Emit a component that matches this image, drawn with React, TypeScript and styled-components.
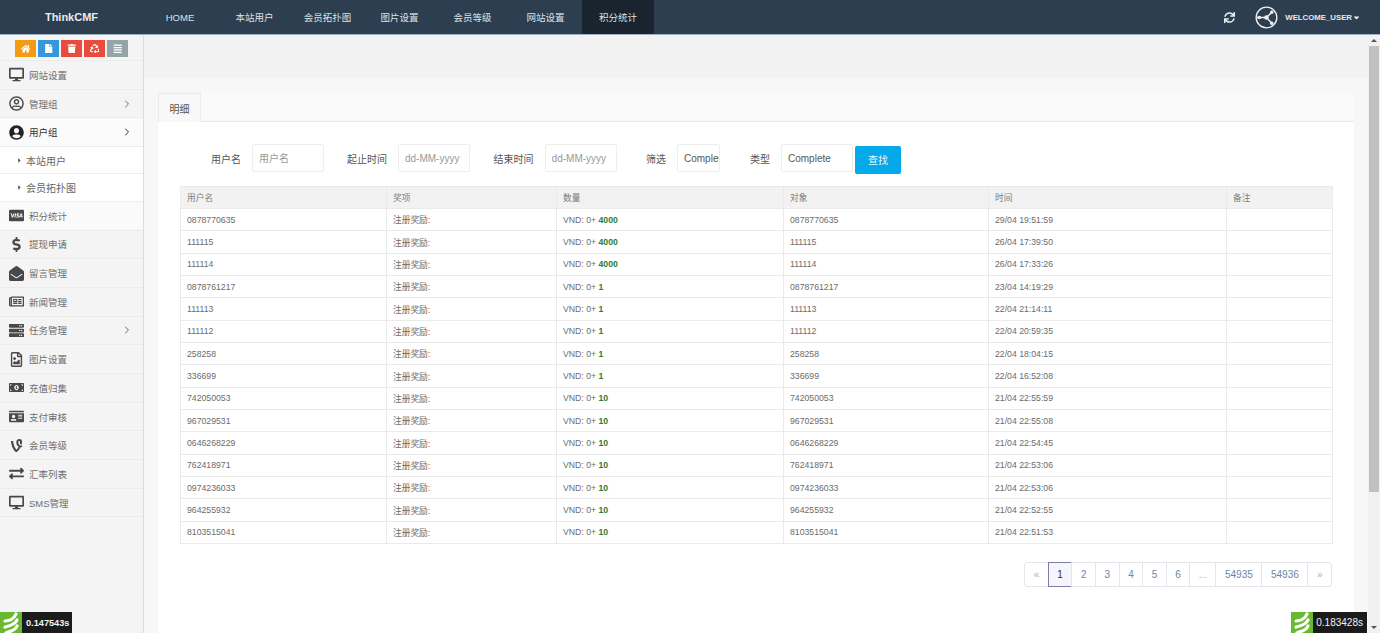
import React from 'react';
import styled, { createGlobalStyle } from 'styled-components';
import {
  FaAlignJustify,
  FaCaretDown,
  FaCaretRight,
  FaCcVisa,
  FaDesktop,
  FaDollarSign,
  FaEnvelopeOpen,
  FaExchangeAlt,
  FaFile,
  FaHome,
  FaIdCard,
  FaMoneyBillAlt,
  FaRecycle,
  FaRegFileImage,
  FaRegNewspaper,
  FaRegUserCircle,
  FaServer,
  FaSync,
  FaTrash,
  FaUserCircle,
  FaVine,
} from 'react-icons/fa';
import { FiChevronRight } from 'react-icons/fi';

const GlobalStyle = createGlobalStyle`
  html, body {
    margin: 0;
    height: 100%;
    overflow: hidden;
    background: #f5f5f5;
    font-family: "Liberation Sans", "Noto Sans CJK SC", sans-serif;
  }
  * { box-sizing: border-box; }
`;

const Page = styled.div`
  display: flex;
  flex-direction: column;
  height: 633px;
  width: 1380px;
  overflow: hidden;
`;

const Navbar = styled.header`
  display: flex;
  align-items: stretch;
  height: 35px;
  flex: none;
  background: #2c3e50;
  border-bottom: 1px solid #9fb0c0;
`;

const Brand = styled.div`
  width: 143px;
  display: flex;
  align-items: center;
  justify-content: center;
  color: #e8ebee;
  font-size: 11px;
  font-weight: bold;
`;

const NavItem = styled.a<{ $width: number; $active?: boolean }>`
  width: ${({ $width }) => $width}px;
  display: flex;
  align-items: center;
  justify-content: center;
  color: #dfe3e7;
  font-size: 9.5px;
  background: ${({ $active }) => ($active ? '#19242f' : 'transparent')};
`;

const NavRight = styled.div`
  margin-left: auto;
  display: flex;
  align-items: center;
  color: #eef0f2;
  padding-right: 19px;
  font-size: 11px;
`;

const UserName = styled.span`
  margin-left: 7px;
  font-size: 7.8px;
  font-weight: bold;
  color: #e6e9ec;
`;

const Body = styled.div`
  flex: 1;
  display: flex;
  min-height: 0;
`;

const Sidebar = styled.aside`
  width: 144px;
  flex: none;
  background: #f4f4f4;
  border-right: 1px solid #dcdcdc;
`;

const Shortcuts = styled.div`
  height: 26px;
  display: flex;
  justify-content: center;
  align-items: flex-start;
  gap: 2px;
  padding-top: 5px;
  border-bottom: 1px solid #ececec;
`;

const ShortcutButton = styled.span<{ $color: string }>`
  width: 21px;
  height: 17px;
  background: ${({ $color }) => $color};
  color: #fff;
  display: flex;
  align-items: center;
  justify-content: center;
  font-size: 9.5px;
`;

const MenuRow = styled.div<{ $light?: string }>`
  height: 28.7px;
  display: flex;
  align-items: center;
  padding: 0 10px 0 8px;
  background: ${({ $light }) => $light || 'transparent'};
  border-bottom: 1px solid #ebebeb;
  color: #6a6a6a;
  font-size: 9.5px;
`;

const MenuIcon = styled.span<{ $dark?: boolean }>`
  width: 16px;
  height: 16px;
  margin-right: 5px;
  display: flex;
  align-items: center;
  justify-content: center;
  font-size: 15px;
  color: ${({ $dark }) => ($dark ? '#222' : '#484848')};
`;

const MenuLabel = styled.span<{ $dark?: boolean }>`
  flex: 1;
  color: ${({ $dark }) => ($dark ? '#333' : '#6e6e6e')};
`;

const SubRow = styled.div`
  height: 27.4px;
  display: flex;
  align-items: center;
  padding-left: 16px;
  background: #fff;
  border-bottom: 1px solid #eee;
  color: #666;
  font-size: 10px;
  svg {
    font-size: 7px;
    margin-right: 3px;
    color: #555;
  }
`;

const Main = styled.main`
  flex: 1;
  min-width: 0;
  display: flex;
  flex-direction: column;
`;

const TopBand = styled.div`
  height: 43px;
  flex: none;
  background: #f2f2f2;
`;

const PageBody = styled.div`
  flex: 1;
  background: #f7f7f7;
  padding: 15px 14px 0;
  display: flex;
  flex-direction: column;
  min-height: 0;
`;

const TabBar = styled.div`
  height: 29px;
  flex: none;
  background: #fafafa;
  border-bottom: 1px solid #e8e8e8;
  display: flex;
`;

const Tab = styled.div`
  width: 43px;
  height: 29px;
  background: #f8f8f8;
  border: 1px solid #ebebeb;
  border-bottom: none;
  color: #555;
  font-size: 10px;
  display: flex;
  align-items: center;
  justify-content: center;
`;

const TabPanel = styled.div`
  flex: 1;
  background: #fff;
  padding: 22px 22px 0;
`;

const SearchForm = styled.form`
  height: 28px;
  display: flex;
  align-items: center;
  padding-left: 31px;
  margin-bottom: 14px;
`;

const FieldLabel = styled.label<{ $gap: number }>`
  margin-left: ${({ $gap }) => $gap}px;
  margin-right: 11px;
  color: #555;
  font-size: 10px;
`;

const FieldInput = styled.input<{ $width: number }>`
  width: ${({ $width }) => $width}px;
  height: 28px;
  padding: 0 0 0 6px;
  border: 1px solid #eee;
  border-radius: 2px;
  background: #fff;
  color: #555;
  font: 10px "Liberation Sans", "Noto Sans CJK SC", sans-serif;
  outline: none;
  &::placeholder {
    color: #999;
    opacity: 1;
  }
`;

const SearchButton = styled.button`
  width: 46px;
  height: 28px;
  margin: 3px 0 0 2px;
  border: none;
  border-radius: 2px;
  background: #03a9e8;
  color: #eaf7fd;
  font: 10px "Liberation Sans", "Noto Sans CJK SC", sans-serif;
  padding: 0;
`;

const DataTable = styled.table`
  width: 1152px;
  table-layout: fixed;
  border-collapse: collapse;
  font-size: 8.7px;
  color: #6b6b6b;
  background: #fff;
`;

const HeadRow = styled.tr`
  height: 22px;
  background: #f2f2f2;
  th {
    font-weight: normal;
    color: #7d7d7d;
    text-align: left;
  }
`;

const DataRow = styled.tr`
  height: 22.35px;
`;

const cellStyle = `
  border: 1px solid #eaeaea;
  padding: 0 0 0 6px;
  white-space: nowrap;
`;

const HeadCell = styled.th`
  ${cellStyle}
`;

const Cell = styled.td`
  ${cellStyle}
`;

const Points = styled.b`
  color: #2e7d32;
`;

const Pager = styled.nav`
  display: flex;
  justify-content: flex-end;
  width: 1152px;
  margin-top: 18px;
`;

const PagerItem = styled.a<{ $width?: number; $active?: boolean; $muted?: boolean }>`
  width: ${({ $width }) => $width || 24.6}px;
  height: 25px;
  margin-left: -1px;
  display: flex;
  align-items: center;
  justify-content: center;
  font-size: 10px;
  background: ${({ $active }) => ($active ? '#f5f5fb' : '#fff')};
  border: 1px solid ${({ $active }) => ($active ? '#7d7da8' : '#e6e6ea')};
  color: ${({ $active, $muted }) => ($active ? '#333' : $muted ? '#b0b0b0' : '#6c86a3')};
  &:first-child {
    border-radius: 3px 0 0 3px;
  }
  &:last-child {
    border-radius: 0 3px 3px 0;
  }
`;

const Scrollbar = styled.div`
  width: 12px;
  flex: none;
  background: #f1f1f1;
  display: flex;
  flex-direction: column;
  align-items: center;
`;

const ScrollArrow = styled.span<{ $up?: boolean }>`
  flex: none;
  margin: 4px 0;
  width: 0;
  height: 0;
  border-left: 3px solid transparent;
  border-right: 3px solid transparent;
  ${({ $up }) => ($up ? 'border-bottom: 3px solid #555;' : 'border-top: 3px solid #555;')}
`;

const ScrollThumb = styled.span`
  width: 10px;
  height: 446px;
  flex: none;
  margin-bottom: auto;
  background: #c1c1c1;
`;

const TimerBadge = styled.div<{ $right?: boolean }>`
  position: fixed;
  bottom: 0;
  ${({ $right }) => ($right ? 'right: 13px;' : 'left: 0;')}
  height: 21px;
  display: flex;
  z-index: 2;
`;

const TimerLogo = styled.span`
  width: 22px;
  height: 21px;
  background: #6ab82f;
  display: block;
  overflow: hidden;
`;

const TimerValue = styled.span<{ $bold?: boolean }>`
  background: #1b1b1b;
  color: #f2f2f2;
  display: flex;
  align-items: center;
  padding: ${({ $bold }) => ($bold ? '0 3px 0 4px' : '0 4px 0 3px')};
  font-size: ${({ $bold }) => ($bold ? 9.2 : 10)}px;
  font-weight: ${({ $bold }) => ($bold ? 'bold' : 'normal')};
`;

const navItems: [string, number][] = [
  ['HOME', 74],
  ['本站用户', 75],
  ['会员拓扑图', 71],
  ['图片设置', 73],
  ['会员等级', 73],
  ['网站设置', 73],
  ['积分统计', 72],
];

const rows: [string, string, string, string][] = [
  ['0878770635', '4000', '29/04 19:51:59', ''],
  ['111115', '4000', '26/04 17:39:50', ''],
  ['111114', '4000', '26/04 17:33:26', ''],
  ['0878761217', '1', '23/04 14:19:29', ''],
  ['111113', '1', '22/04 21:14:11', ''],
  ['111112', '1', '22/04 20:59:35', ''],
  ['258258', '1', '22/04 18:04:15', ''],
  ['336699', '1', '22/04 16:52:08', ''],
  ['742050053', '10', '21/04 22:55:59', ''],
  ['967029531', '10', '21/04 22:55:08', ''],
  ['0646268229', '10', '21/04 22:54:45', ''],
  ['762418971', '10', '21/04 22:53:06', ''],
  ['0974236033', '10', '21/04 22:53:06', ''],
  ['964255932', '10', '21/04 22:52:55', ''],
  ['8103515041', '10', '21/04 22:51:53', ''],
];

const columns = [206, 170, 227, 205, 238, 106];
const headers = ['用户名', '奖项', '数量', '对象', '时间', '备注'];

const ShareCircle = () => (
  <svg width="23" height="23" viewBox="0 0 24 24" fill="none" stroke="#eef0f2" strokeWidth="1.4">
    <circle cx="12" cy="12" r="10.8" />
    <path d="M2 12h10l5.5-5.5M12 12l5.5 6" />
    <circle cx="4.5" cy="12" r="1.2" fill="#eef0f2" />
    <circle cx="12" cy="12" r="1.7" fill="#eef0f2" />
    <circle cx="17.5" cy="6.5" r="1.2" fill="#eef0f2" />
    <circle cx="17.5" cy="18" r="1.2" fill="#eef0f2" />
  </svg>
);

const TimerMark = () => (
  <svg width="22" height="21" viewBox="0 0 22 21" fill="none" stroke="#fff" strokeWidth="3.2" strokeLinecap="round">
    <path d="M5 9 C9 9 14 7 16 2" />
    <path d="M5 15 C9 14 15 13 17 8" />
    <path d="M6 21 C10 19 15 19 17 14" />
  </svg>
);

export default function App() {
  return (
    <>
      <GlobalStyle />
      <Page>
        <Navbar>
          <Brand>ThinkCMF</Brand>
          {navItems.map(([label, width], i) => (
            <NavItem key={label} $width={width} $active={i === navItems.length - 1}>
              {label}
            </NavItem>
          ))}
          <NavRight>
            <FaSync style={{ marginRight: 20 }} />
            <ShareCircle />
            <UserName>WELCOME_USER</UserName>
            <FaCaretDown size={9} />
          </NavRight>
        </Navbar>
        <Body>
          <Sidebar>
            <Shortcuts>
              <ShortcutButton $color="#f39c12"><FaHome /></ShortcutButton>
              <ShortcutButton $color="#3498db"><FaFile /></ShortcutButton>
              <ShortcutButton $color="#e74c3c"><FaTrash /></ShortcutButton>
              <ShortcutButton $color="#e74c3c"><FaRecycle /></ShortcutButton>
              <ShortcutButton $color="#95a5a6"><FaAlignJustify /></ShortcutButton>
            </Shortcuts>
            <MenuRow>
              <MenuIcon><FaDesktop /></MenuIcon>
              <MenuLabel>网站设置</MenuLabel>
            </MenuRow>
            <MenuRow>
              <MenuIcon><FaRegUserCircle /></MenuIcon>
              <MenuLabel>管理组</MenuLabel>
              <FiChevronRight size={12} />
            </MenuRow>
            <MenuRow $light="#fbfbfb">
              <MenuIcon $dark><FaUserCircle /></MenuIcon>
              <MenuLabel $dark>用户组</MenuLabel>
              <FiChevronRight size={12} color="#333" />
            </MenuRow>
            <SubRow><FaCaretRight />本站用户</SubRow>
            <SubRow><FaCaretRight />会员拓扑图</SubRow>
            <MenuRow $light="#fafafa">
              <MenuIcon><FaCcVisa /></MenuIcon>
              <MenuLabel>积分统计</MenuLabel>
            </MenuRow>
            <MenuRow>
              <MenuIcon><FaDollarSign /></MenuIcon>
              <MenuLabel>提现申请</MenuLabel>
            </MenuRow>
            <MenuRow>
              <MenuIcon><FaEnvelopeOpen /></MenuIcon>
              <MenuLabel>留言管理</MenuLabel>
            </MenuRow>
            <MenuRow>
              <MenuIcon><FaRegNewspaper /></MenuIcon>
              <MenuLabel>新闻管理</MenuLabel>
            </MenuRow>
            <MenuRow>
              <MenuIcon><FaServer /></MenuIcon>
              <MenuLabel>任务管理</MenuLabel>
              <FiChevronRight size={12} />
            </MenuRow>
            <MenuRow>
              <MenuIcon><FaRegFileImage /></MenuIcon>
              <MenuLabel>图片设置</MenuLabel>
            </MenuRow>
            <MenuRow>
              <MenuIcon><FaMoneyBillAlt /></MenuIcon>
              <MenuLabel>充值归集</MenuLabel>
            </MenuRow>
            <MenuRow>
              <MenuIcon><FaIdCard /></MenuIcon>
              <MenuLabel>支付审核</MenuLabel>
            </MenuRow>
            <MenuRow>
              <MenuIcon><FaVine /></MenuIcon>
              <MenuLabel>会员等级</MenuLabel>
            </MenuRow>
            <MenuRow>
              <MenuIcon><FaExchangeAlt /></MenuIcon>
              <MenuLabel>汇率列表</MenuLabel>
            </MenuRow>
            <MenuRow>
              <MenuIcon><FaDesktop /></MenuIcon>
              <MenuLabel>SMS管理</MenuLabel>
            </MenuRow>
          </Sidebar>
          <Main>
            <TopBand />
            <PageBody>
              <TabBar>
                <Tab>明细</Tab>
              </TabBar>
              <TabPanel>
                <SearchForm>
                  <FieldLabel $gap={0}>用户名</FieldLabel>
                  <FieldInput $width={72} placeholder="用户名" />
                  <FieldLabel $gap={23}>起止时间</FieldLabel>
                  <FieldInput $width={72} placeholder="dd-MM-yyyy" />
                  <FieldLabel $gap={23.6}>结束时间</FieldLabel>
                  <FieldInput $width={72} placeholder="dd-MM-yyyy" />
                  <FieldLabel $gap={29.4}>筛选</FieldLabel>
                  <FieldInput $width={43} defaultValue="Complete" />
                  <FieldLabel $gap={30}>类型</FieldLabel>
                  <FieldInput $width={72} defaultValue="Complete" />
                  <SearchButton type="button">查找</SearchButton>
                </SearchForm>
                <DataTable>
                  <colgroup>
                    {columns.map((w, i) => (
                      <col key={i} style={{ width: w }} />
                    ))}
                  </colgroup>
                  <thead>
                    <HeadRow>
                      {headers.map((h) => (
                        <HeadCell key={h}>{h}</HeadCell>
                      ))}
                    </HeadRow>
                  </thead>
                  <tbody>
                    {rows.map(([user, points, time, note]) => (
                      <DataRow key={user + time}>
                        <Cell>{user}</Cell>
                        <Cell>注册奖励:</Cell>
                        <Cell>VND: 0+ <Points>{points}</Points></Cell>
                        <Cell>{user}</Cell>
                        <Cell>{time}</Cell>
                        <Cell>{note}</Cell>
                      </DataRow>
                    ))}
                  </tbody>
                </DataTable>
                <Pager>
                  <PagerItem $muted>«</PagerItem>
                  <PagerItem $active>1</PagerItem>
                  <PagerItem>2</PagerItem>
                  <PagerItem>3</PagerItem>
                  <PagerItem>4</PagerItem>
                  <PagerItem>5</PagerItem>
                  <PagerItem>6</PagerItem>
                  <PagerItem $muted $width={27}>...</PagerItem>
                  <PagerItem $width={47}>54935</PagerItem>
                  <PagerItem $width={47}>54936</PagerItem>
                  <PagerItem $muted>»</PagerItem>
                </Pager>
              </TabPanel>
            </PageBody>
          </Main>
          <Scrollbar>
            <ScrollArrow $up />
            <ScrollThumb />
            <ScrollArrow />
          </Scrollbar>
        </Body>
      </Page>
      <TimerBadge>
        <TimerLogo><TimerMark /></TimerLogo>
        <TimerValue $bold>0.147543s</TimerValue>
      </TimerBadge>
      <TimerBadge $right>
        <TimerLogo><TimerMark /></TimerLogo>
        <TimerValue>0.183428s</TimerValue>
      </TimerBadge>
    </>
  );
}
